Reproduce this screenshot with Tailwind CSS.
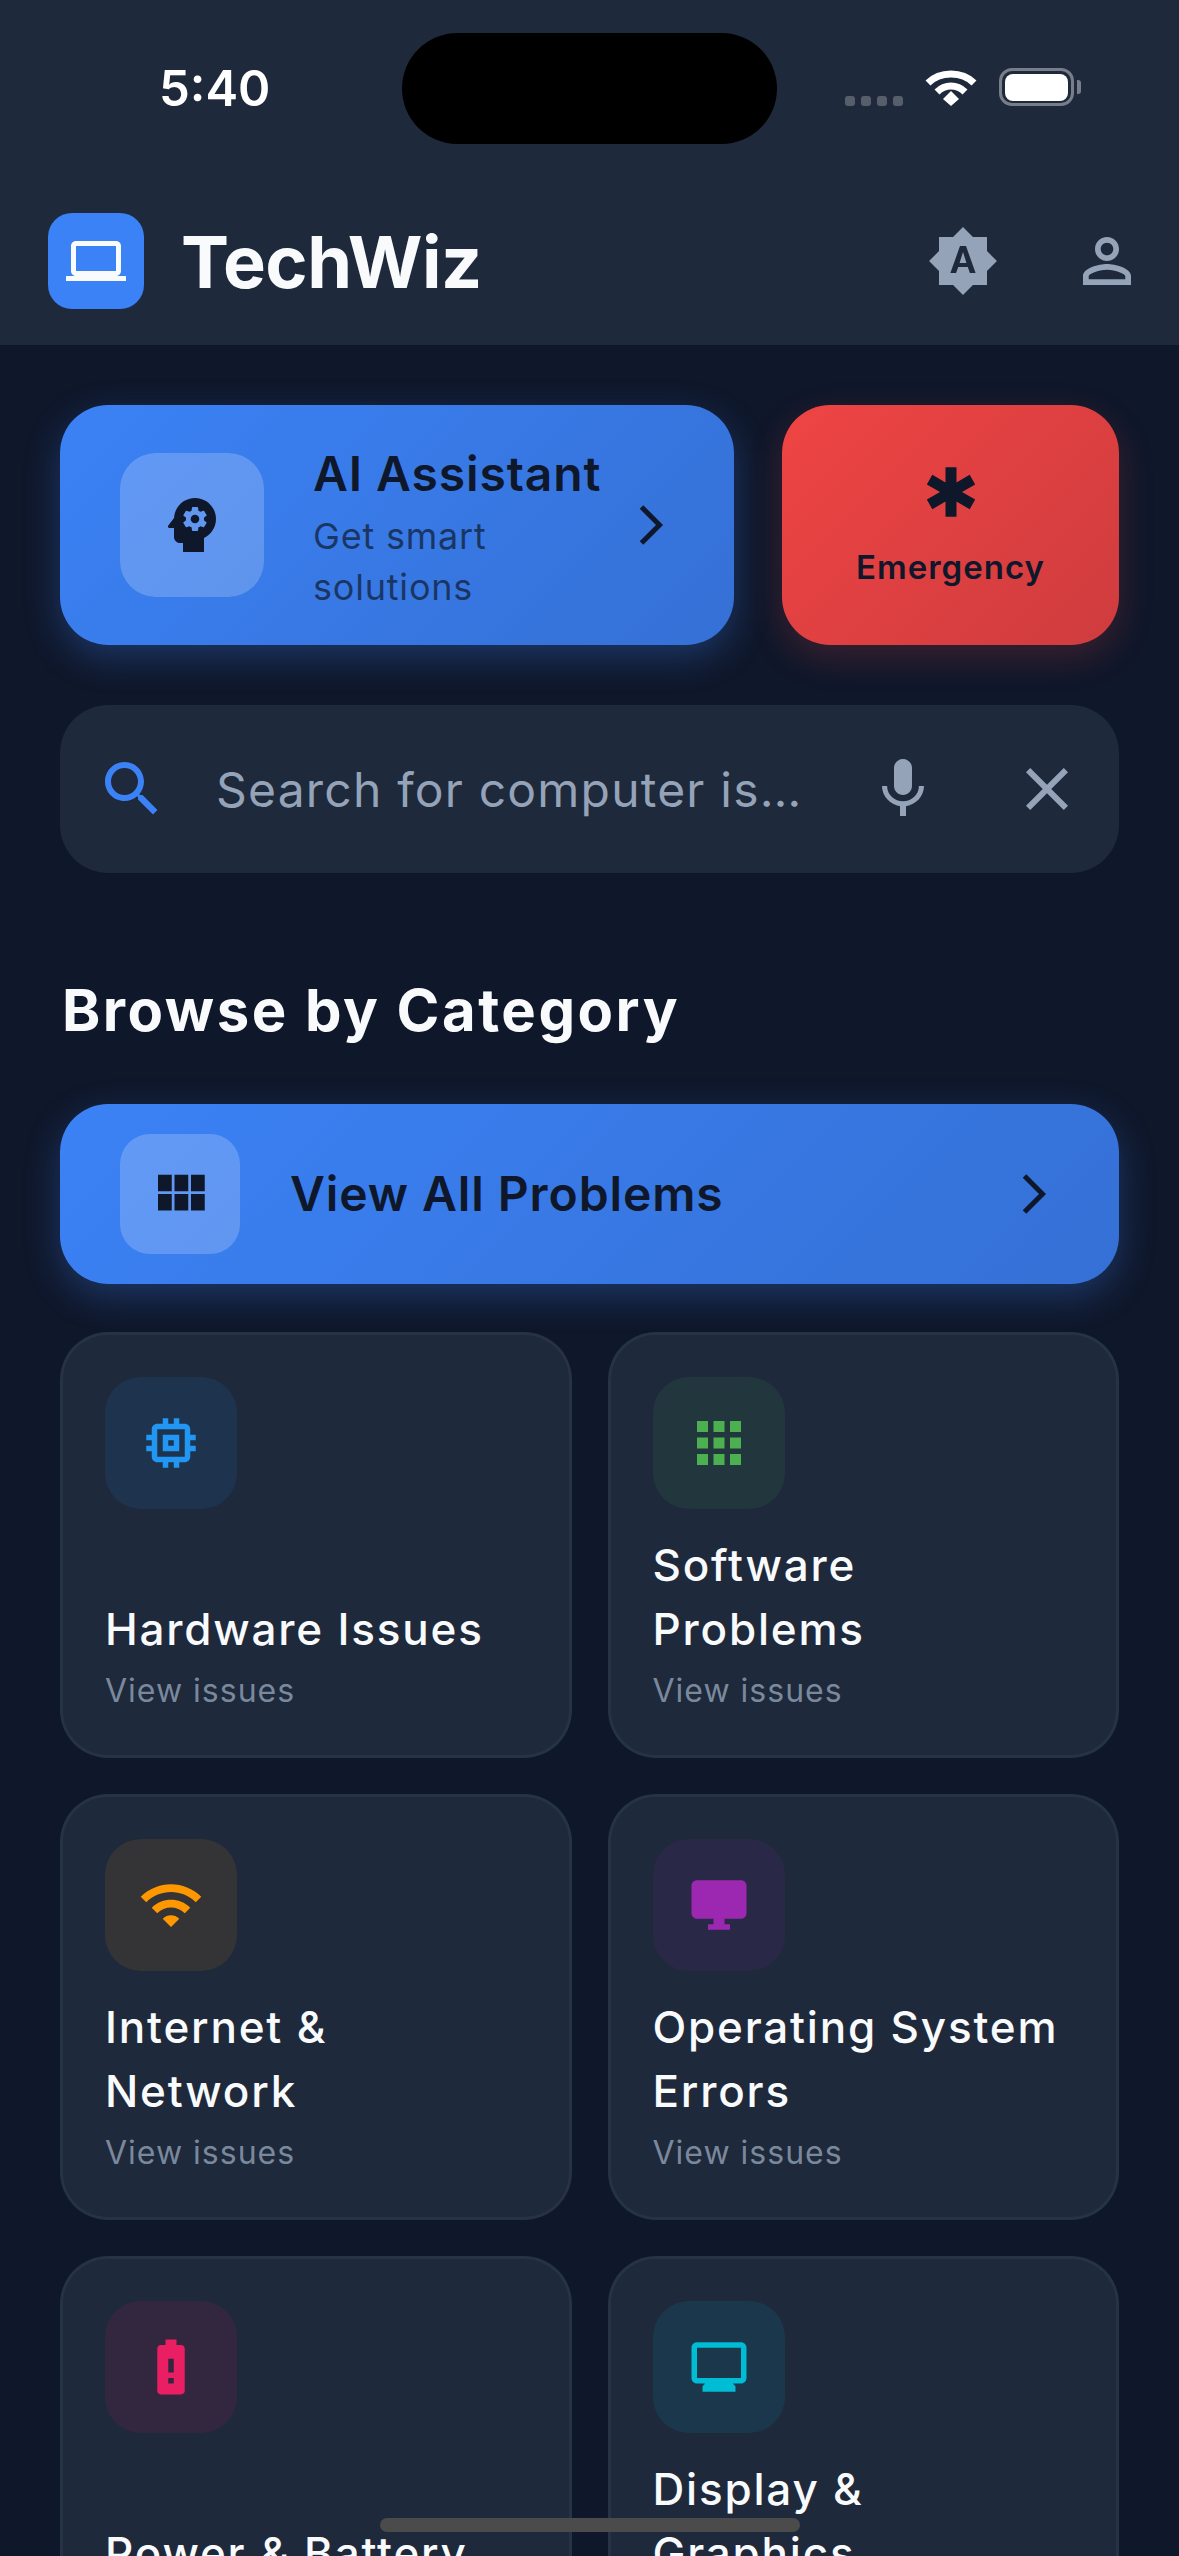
<!DOCTYPE html>
<html lang="en">
	<head>
		<meta charset="UTF-8" />
		<meta name="viewport" content="width=device-width, initial-scale=1.0" />
		<title>TechWiz</title>
		<script src="https://cdn.jsdelivr.net/npm/@tailwindcss/browser@4"></script>
	</head>
	<body class="relative h-[2556px] w-[1179px] overflow-hidden bg-[#0f172a] font-['Inter',sans-serif] text-[#f8fafc]">
		<!-- status bar + app bar -->
		<header class="relative h-[345px] bg-[#1e293b]">
			<div class="absolute left-[402px] top-[33px] h-[111px] w-[375px] rounded-[56px] bg-black"></div>
			<div class="flex h-[213px] items-start justify-between pl-[159px] pr-[98px] pt-[59px]">
				<span class="text-[49px] font-semibold leading-[60px] text-white">5:40</span>
				<div class="flex items-end gap-[22px] pt-[9px]">
					<div class="flex gap-[6px]">
						<span class="h-[10px] w-[10px] rounded-[3px] bg-white/25"></span>
						<span class="h-[10px] w-[10px] rounded-[3px] bg-white/25"></span>
						<span class="h-[10px] w-[10px] rounded-[3px] bg-white/25"></span>
						<span class="h-[10px] w-[10px] rounded-[3px] bg-white/25"></span>
					</div>
					<svg class="h-[38px] w-[52px]" viewBox="0 0 52 38" fill="none" stroke="white">
						<path d="M3 15 C15 3 37 3 49 15" stroke-width="7" />
						<path d="M12 24 C20 16 32 16 40 24" stroke-width="7" />
						<path d="M18 31 L26 23 L34 31 L26 38 Z" fill="white" stroke="none" />
					</svg>
					<div class="flex items-center gap-[3px]">
						<div class="flex h-[38px] w-[75px] items-center justify-center rounded-[13px] border-[3px] border-white/40">
							<div class="h-[27px] w-[63px] rounded-[8px] bg-white"></div>
						</div>
						<div class="h-[14px] w-[4px] rounded-r-[3px] bg-white/40"></div>
					</div>
				</div>
			</div>
			<div class="flex h-[96px] items-center justify-between pl-[48px] pr-[36px]">
				<div class="flex items-center gap-[37px]">
					<div class="flex h-[96px] w-[96px] items-center justify-center rounded-[24px] bg-[#3b82f6]">
						<svg class="h-[60px] w-[60px] fill-[#f8fafc]" viewBox="0 0 24 24"><path d="M20 18c1.1 0 1.99-.9 1.99-2L22 6c0-1.1-.9-2-2-2H4c-1.1 0-2 .9-2 2v10c0 1.1.9 2 2 2H0v2h24v-2h-4zM4 6h16v10H4V6z" /></svg>
					</div>
					<span class="mt-[2px] text-[72px] font-bold leading-[96px] tracking-[-0.5px]">TechWiz</span>
				</div>
				<div class="flex items-center gap-[72px]">
					<svg class="h-[72px] w-[72px] fill-[#94a3b8]" viewBox="0 0 24 24"><path d="M10.85 12.65h2.3L12 9l-1.15 3.65zM20 8.69V4h-4.69L12 .69 8.69 4H4v4.69L.69 12 4 15.31V20h4.69L12 23.31 15.31 20H20v-4.69L23.31 12 20 8.69zM14.3 16l-.7-2h-3.2l-.7 2H7.8L11 7h2l3.2 9h-1.9z" /></svg>
					<svg class="h-[72px] w-[72px] fill-[#94a3b8]" viewBox="0 0 24 24"><path d="M12 5.9c1.16 0 2.1.94 2.1 2.1s-.94 2.1-2.1 2.1S9.9 9.16 9.9 8s.94-2.1 2.1-2.1m0 9c2.97 0 6.1 1.46 6.1 2.1v1.1H5.9V17c0-.64 3.13-2.1 6.1-2.1M12 4C9.79 4 8 5.79 8 8s1.79 4 4 4 4-1.79 4-4-1.79-4-4-4zm0 9c-2.67 0-8 1.34-8 4v3h16v-3c0-2.66-5.33-4-8-4z" /></svg>
				</div>
			</div>
		</header>

		<main class="px-[60px] pt-[60px]">
			<div class="grid grid-cols-[674px_337px] gap-[48px]">
				<div class="flex h-[240px] items-center rounded-[48px] bg-linear-135 from-[#3b82f6] to-[#3570d5] pl-[60px] pr-[47px] shadow-[0_12px_36px_rgba(59,130,246,0.3)]">
					<div class="flex h-[144px] w-[144px] shrink-0 items-center justify-center rounded-[36px] bg-white/20">
						<svg class="h-[72px] w-[72px] fill-[#0f172a]" viewBox="0 0 24 24"><path d="M13 8.57c-.79 0-1.43.64-1.43 1.43s.64 1.43 1.43 1.43 1.43-.64 1.43-1.43-.64-1.43-1.43-1.43z" /><path d="M13 3C9.25 3 6.2 5.94 6.02 9.64L4.1 12.2c-.25.33-.01.8.4.8H6v3c0 1.1.9 2 2 2h1v3h7v-4.68c2.36-1.12 4-3.53 4-6.32 0-3.87-3.13-7-7-7zm3 7c0 .13-.01.26-.03.39l.83.66c.08.06.1.16.05.25l-.8 1.39c-.05.09-.16.12-.24.09l-.99-.4c-.21.16-.43.29-.67.39L14 13.83c-.01.1-.1.17-.2.17h-1.6c-.1 0-.18-.07-.2-.17l-.15-1.06c-.25-.1-.47-.23-.68-.39l-.99.4c-.09.03-.2 0-.25-.09l-.8-1.39c-.05-.08-.03-.19.05-.25l.84-.66c-.01-.13-.02-.26-.02-.39s.02-.27.04-.39l-.85-.66c-.08-.06-.1-.16-.05-.26l.8-1.38c.05-.09.15-.12.24-.09l1 .4c.2-.15.43-.29.67-.39L12 6.17c.02-.1.1-.17.2-.17h1.6c.1 0 .18.07.2.17l.15 1.06c.24.1.46.23.67.39l1-.4c.09-.03.2 0 .24.09l.8 1.38c.05.09.03.2-.05.26l-.85.66c.03.12.04.25.04.39z" /></svg>
					</div>
					<div class="ml-[49px] mt-[6px] flex-1">
						<div class="text-[48px] font-semibold leading-[62px] tracking-[0.9px] text-[#0f172a]">AI Assistant</div>
						<div class="mt-[6px] text-[36px] leading-[51px] tracking-[0.8px] text-[#0f172a]/70">Get smart solutions</div>
					</div>
					<svg class="h-[72px] w-[72px] shrink-0" viewBox="0 0 72 72" fill="none" stroke="#0f172a" stroke-width="5"><path d="M26.5 18 L44.5 36 L26.5 54" /></svg>
				</div>
				<div class="flex h-[240px] flex-col items-center rounded-[48px] bg-linear-135 from-[#ef4444] to-[#cf3c3e] pt-[54px] shadow-[0_12px_36px_rgba(239,68,68,0.2)]">
					<svg class="h-[66px] w-[66px] fill-[#0f172a]" viewBox="0 0 24 24"><path d="M20.79 9.23l-2-3.46L14 8.54V3h-4v5.54L5.21 5.77l-2 3.46L8 12l-4.79 2.77 2 3.46L10 15.46V21h4v-5.54l4.79 2.77 2-3.46L16 12l4.79-2.77z" /></svg>
					<span class="mt-[21px] text-[33px] font-semibold leading-[42px] tracking-[1px] text-[#0f172a]">Emergency</span>
				</div>
			</div>

			<div class="mt-[60px] flex h-[168px] items-center rounded-[48px] bg-[#1e293b] px-[36px]">
				<svg class="h-[72px] w-[72px] shrink-0 fill-[#3b82f6]" viewBox="0 0 24 24"><path d="M15.5 14h-.79l-.28-.27C15.41 12.59 16 11.11 16 9.5 16 5.91 13.09 3 9.5 3S3 5.91 3 9.5 5.91 16 9.5 16c1.61 0 3.09-.59 4.23-1.57l.27.28v.79l5 4.99L20.49 19l-4.99-5zm-6 0C7.01 14 5 11.99 5 9.5S7.01 5 9.5 5 14 7.01 14 9.5 11.99 14 9.5 14z" /></svg>
				<span class="ml-[48px] flex-1 pt-[2px] text-[48px] tracking-[1.2px] text-[#94a3b8]">Search for computer is…</span>
				<svg class="h-[72px] w-[72px] shrink-0 fill-[#94a3b8]" viewBox="0 0 24 24"><path d="M12 14c1.66 0 2.99-1.34 2.99-3L15 5c0-1.66-1.34-3-3-3S9 3.34 9 5v6c0 1.66 1.34 3 3 3zm5.3-3c0 3-2.54 5.1-5.3 5.1S6.7 14 6.7 11H5c0 3.41 2.72 6.23 6 6.72V21h2v-3.28c3.28-.48 6-3.3 6-6.72h-1.7z" /></svg>
				<svg class="ml-[72px] h-[72px] w-[72px] shrink-0 fill-[#94a3b8]" viewBox="0 0 24 24"><path d="M19 6.41L17.59 5 12 10.59 6.41 5 5 6.41 10.59 12 5 17.59 6.41 19 12 13.41 17.59 19 19 17.59 13.41 12z" /></svg>
			</div>

			<h2 class="mb-[55px] ml-[2px] mt-[98px] text-[58px] font-bold leading-[78px] tracking-[2.5px]">Browse by Category</h2>

			<div class="mb-[48px] flex h-[180px] items-center rounded-[48px] bg-linear-135 from-[#3b82f6] to-[#3570d5] pl-[60px] pr-[49px] shadow-[0_12px_36px_rgba(59,130,246,0.3)]">
				<div class="flex h-[120px] w-[120px] shrink-0 items-center justify-center rounded-[30px] bg-white/20">
					<svg class="h-[66px] w-[66px] fill-[#0f172a]" viewBox="0 0 24 24"><path d="M4 11h5V5H4v6zm0 7h5v-6H4v6zm6 0h5v-6h-5v6zm6 0h5v-6h-5v6zm-6-7h5V5h-5v6zm6-6v6h5V5h-5z" /></svg>
				</div>
				<span class="ml-[50px] flex-1 text-[48px] font-semibold tracking-[0.9px] text-[#0f172a]">View All Problems</span>
				<svg class="h-[72px] w-[72px] shrink-0" viewBox="0 0 72 72" fill="none" stroke="#0f172a" stroke-width="5"><path d="M26.5 18 L44.5 36 L26.5 54" /></svg>
			</div>

			<div class="grid grid-cols-2 gap-[36px]">
				<article class="flex h-[426px] flex-col justify-between rounded-[48px] border-[3px] border-[#334155]/40 bg-[#1e293b] p-[42px]">
					<div class="flex h-[132px] w-[132px] items-center justify-center rounded-[36px] bg-[#2196f3]/10">
						<svg class="h-[66px] w-[66px] fill-[#2196f3]" viewBox="0 0 24 24"><path d="M15 9H9v6h6V9zm-2 4h-2v-2h2v2zm8-2V9h-2V7c0-1.1-.9-2-2-2h-2V3h-2v2h-2V3H9v2H7c-1.1 0-2 .9-2 2v2H3v2h2v2H3v2h2v2c0 1.1.9 2 2 2h2v2h2v-2h2v2h2v-2h2c1.1 0 2-.9 2-2v-2h2v-2h-2v-2h2zm-4 6H7V7h10v10z" /></svg>
					</div>
					<div>
						<h3 class="text-[44px] font-medium leading-[64px] tracking-[1.8px]">Hardware Issues</h3>
						<p class="mt-[7px] text-[32px] leading-[45px] tracking-[1px] text-[#94a3b8]/80">View issues</p>
					</div>
				</article>
				<article class="flex h-[426px] flex-col justify-between rounded-[48px] border-[3px] border-[#334155]/40 bg-[#1e293b] p-[42px]">
					<div class="flex h-[132px] w-[132px] items-center justify-center rounded-[36px] bg-[#4caf50]/10">
						<svg class="h-[66px] w-[66px] fill-[#4caf50]" viewBox="0 0 24 24"><path d="M4 8h4V4H4v4zm6 12h4v-4h-4v4zm-6 0h4v-4H4v4zm0-6h4v-4H4v4zm6 0h4v-4h-4v4zm6-10v4h4V4h-4zm-6 4h4V4h-4v4zm6 6h4v-4h-4v4zm0 6h4v-4h-4v4z" /></svg>
					</div>
					<div>
						<h3 class="text-[44px] font-medium leading-[64px] tracking-[1.8px]">Software Problems</h3>
						<p class="mt-[7px] text-[32px] leading-[45px] tracking-[1px] text-[#94a3b8]/80">View issues</p>
					</div>
				</article>
				<article class="flex h-[426px] flex-col justify-between rounded-[48px] border-[3px] border-[#334155]/40 bg-[#1e293b] p-[42px]">
					<div class="flex h-[132px] w-[132px] items-center justify-center rounded-[36px] bg-[#ff9800]/10">
						<svg class="h-[66px] w-[66px] fill-[#ff9800]" viewBox="0 0 24 24"><path d="M1 9l2 2c4.97-4.97 13.03-4.97 18 0l2-2C16.93 2.93 7.08 2.93 1 9zm8 8l3 3 3-3c-1.65-1.66-4.34-1.66-6 0zm-4-4l2 2c2.76-2.76 7.24-2.76 10 0l2-2C15.14 9.14 8.87 9.14 5 13z" /></svg>
					</div>
					<div>
						<h3 class="text-[44px] font-medium leading-[64px] tracking-[1.8px]">Internet &amp; Network</h3>
						<p class="mt-[7px] text-[32px] leading-[45px] tracking-[1px] text-[#94a3b8]/80">View issues</p>
					</div>
				</article>
				<article class="flex h-[426px] flex-col justify-between rounded-[48px] border-[3px] border-[#334155]/40 bg-[#1e293b] p-[42px]">
					<div class="flex h-[132px] w-[132px] items-center justify-center rounded-[36px] bg-[#9c27b0]/10">
						<svg class="h-[66px] w-[66px] fill-[#9c27b0]" viewBox="0 0 24 24"><path d="M20 3H4c-1.1 0-2 .9-2 2v10c0 1.1.9 2 2 2h6v2H8v2h8v-2h-2v-2h6c1.1 0 2-.9 2-2V5c0-1.1-.9-2-2-2z" /></svg>
					</div>
					<div>
						<h3 class="text-[44px] font-medium leading-[64px] tracking-[1.8px]">Operating System Errors</h3>
						<p class="mt-[7px] text-[32px] leading-[45px] tracking-[1px] text-[#94a3b8]/80">View issues</p>
					</div>
				</article>
				<article class="flex h-[426px] flex-col justify-between rounded-[48px] border-[3px] border-[#334155]/40 bg-[#1e293b] p-[42px]">
					<div class="flex h-[132px] w-[132px] items-center justify-center rounded-[36px] bg-[#e91e63]/10">
						<svg class="h-[66px] w-[66px] fill-[#e91e63]" viewBox="0 0 24 24"><path d="M15.67 4H14V2h-4v2H8.33C7.6 4 7 4.6 7 5.33v15.33C7 21.4 7.6 22 8.33 22h7.33c.74 0 1.34-.6 1.34-1.33V5.33C17 4.6 16.4 4 15.67 4zM13 18h-2v-2h2v2zm0-4h-2V9h2v5z" /></svg>
					</div>
					<div>
						<h3 class="text-[44px] font-medium leading-[64px] tracking-[1.8px]">Power &amp; Battery</h3>
						<p class="mt-[7px] text-[32px] leading-[45px] tracking-[1px] text-[#94a3b8]/80">View issues</p>
					</div>
				</article>
				<article class="flex h-[426px] flex-col justify-between rounded-[48px] border-[3px] border-[#334155]/40 bg-[#1e293b] p-[42px]">
					<div class="flex h-[132px] w-[132px] items-center justify-center rounded-[36px] bg-[#00bcd4]/10">
						<svg class="h-[66px] w-[66px] fill-[#00bcd4]" viewBox="0 0 24 24"><path d="M20 3H4c-1.1 0-2 .9-2 2v11c0 1.1.9 2 2 2h3l-1 1v2h12v-2l-1-1h3c1.1 0 2-.9 2-2V5c0-1.1-.9-2-2-2zm0 13H4V5h16v11z" /></svg>
					</div>
					<div>
						<h3 class="text-[44px] font-medium leading-[64px] tracking-[1.8px]">Display &amp; Graphics</h3>
						<p class="mt-[7px] text-[32px] leading-[45px] tracking-[1px] text-[#94a3b8]/80">View issues</p>
					</div>
				</article>
			</div>
		</main>

		<div class="absolute bottom-[24px] left-[380px] h-[14px] w-[420px] rounded-full bg-[#4b4b4b]"></div>
	</body>
</html>
